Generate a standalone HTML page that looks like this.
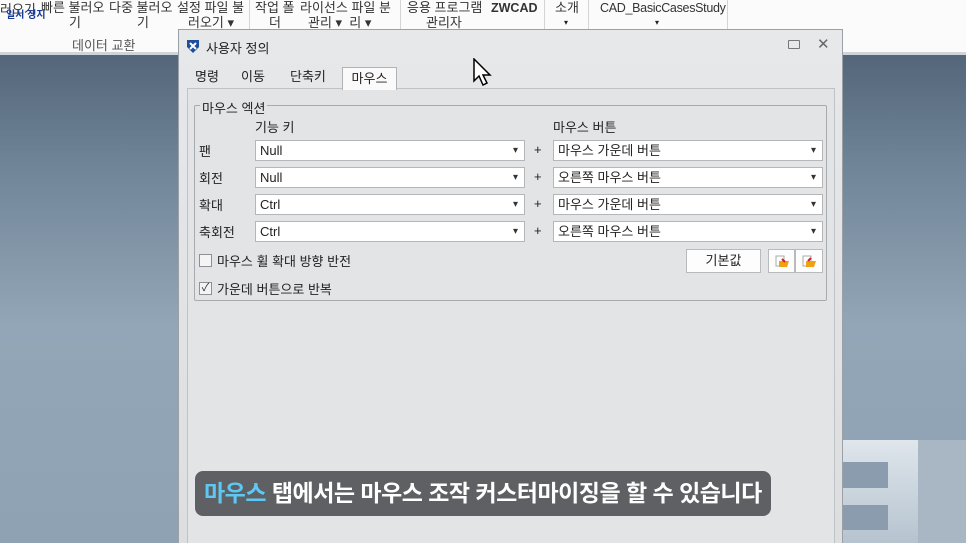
<!DOCTYPE html>
<html><head><meta charset="utf-8"><style>
*{margin:0;padding:0;box-sizing:border-box}
html,body{width:966px;height:543px;overflow:hidden}
body{position:relative;font-family:"Liberation Sans","Noto Sans CJK KR",sans-serif;font-size:13px;color:#222;background:linear-gradient(180deg,#46576a 0%,#6f8497 30%,#93a6b7 60%,#8ea2b4 100%)}
.ab{position:absolute;white-space:nowrap}
#rib{position:absolute;left:0;top:0;width:966px;height:55px;background:#fbfbfb;border-bottom:3px solid #cfd4d9}
.sep{position:absolute;top:0;height:30px;border-left:1px solid #d5d5d5}
.rt{font-size:13px;color:#333;line-height:14px}
#dlg{position:absolute;left:178px;top:29px;width:665px;height:514px;overflow:hidden;background:linear-gradient(180deg,#e6e8ea,#dcdee0);border:1px solid #9aa0a6;border-bottom:none}
.tab{position:absolute;top:36px;height:22px;line-height:22px;font-size:13px}
#pan{position:absolute;left:8px;top:58px;width:648px;height:470px;border:1px solid #c0c3c6;background:#e2e4e6}
#grp{position:absolute;left:6px;top:16px;width:633px;height:196px;border:1px solid #a8abae;border-radius:2px}
.sel{position:absolute;height:21px;background:#fff;border:1px solid #b4b6b8;font-size:13px;line-height:19px;padding-left:4px}
.sel:after{content:"▾";position:absolute;right:6px;top:0;font-size:10px;color:#333}
.btn{position:absolute;background:#fdfdfd;border:1px solid #b8babc;height:24px;text-align:center;line-height:22px}
.cb{position:absolute;width:13px;height:13px;border:1px solid #8d9094;background:#f4f4f4}
</style></head><body>
<div id="rib">
<div class="ab rt" style="left:0;top:3px">러오기</div>
<div class="ab" style="left:6px;top:6px;font-size:10px;color:#1a3c9a;font-weight:bold">일시 정지</div>
<div class="ab rt" style="left:41px;top:1px">빠른 불러오</div>
<div class="ab rt" style="left:69px;top:16px">기</div>
<div class="ab rt" style="left:109px;top:1px">다중 불러오</div>
<div class="ab rt" style="left:137px;top:16px">기</div>
<div class="ab rt" style="left:177px;top:1px">설정 파일 불</div>
<div class="ab rt" style="left:188px;top:16px">러오기 ▾</div>
<div class="ab" style="left:72px;top:35px;color:#555;font-size:13px">데이터 교환</div>
<div class="sep" style="left:249px;height:52px"></div>
<div class="ab rt" style="left:255px;top:1px">작업 폴</div>
<div class="ab rt" style="left:269px;top:16px">더</div>
<div class="ab rt" style="left:300px;top:1px">라이선스 파일 분</div>
<div class="ab rt" style="left:308px;top:16px">관리 ▾ &nbsp;리 ▾</div>
<div class="sep" style="left:400px"></div>
<div class="ab rt" style="left:407px;top:1px">응용 프로그램</div>
<div class="ab rt" style="left:426px;top:16px">관리자</div>
<div class="ab rt" style="left:491px;top:1px;font-weight:bold;font-size:12.5px">ZWCAD</div>
<div class="sep" style="left:544px"></div>
<div class="ab rt" style="left:555px;top:1px">소개</div>
<div class="ab" style="left:564px;top:18px;font-size:8px">▾</div>
<div class="sep" style="left:588px"></div>
<div class="ab rt" style="left:600px;top:1px;font-size:12.5px;letter-spacing:-0.3px">CAD_BasicCasesStudy</div>
<div class="ab" style="left:655px;top:18px;font-size:8px">▾</div>
<div class="sep" style="left:727px"></div>
</div>
<div style="position:absolute;left:843px;top:440px;width:123px;height:103px;background:linear-gradient(180deg,#dfe6ec,#b6c3cf)"></div>
<div style="position:absolute;left:843px;top:462px;width:45px;height:26px;background:#8a9cad"></div>
<div style="position:absolute;left:843px;top:505px;width:45px;height:25px;background:#8a9cad"></div>
<div style="position:absolute;left:918px;top:440px;width:48px;height:103px;background:#a9b7c4"></div>
<div id="dlg">
<svg class="ab" style="left:6px;top:8px" width="16" height="16" viewBox="0 0 16 16"><path d="M2 2h12v7l-6 6-6-6z" fill="#1f4f9a"/><path d="M5 5l6 6M11 5l-6 6" stroke="#fff" stroke-width="2"/></svg>
<div class="ab" style="left:27px;top:8px;font-size:13px">사용자 정의</div>
<div class="ab" style="left:609px;top:10px;width:12px;height:9px;border:1.5px solid #777;border-radius:1px"></div>
<div class="ab" style="left:638px;top:5px;font-size:15px;color:#666">✕</div>
<div class="tab" style="left:16px">명령</div>
<div class="tab" style="left:62px">이동</div>
<div class="tab" style="left:111px">단축키</div>
<div class="tab" style="left:163px;top:37px;width:55px;background:#fafafa;border:1px solid #b0b3b6;border-bottom:none;text-align:center;height:23px;z-index:2">마우스</div>
<div id="pan">
<div id="grp"></div>
<div class="ab" style="left:12px;top:9px;background:#e2e4e6;padding:0 2px">마우스 엑션</div>
<div class="ab" style="left:67px;top:28px">기능 키</div>
<div class="ab" style="left:365px;top:28px">마우스 버튼</div>
<div class="ab" style="left:11px;top:52px">팬</div>
<div class="ab" style="left:11px;top:79px">회전</div>
<div class="ab" style="left:11px;top:106px">확대</div>
<div class="ab" style="left:11px;top:133px">축회전</div>
<div class="sel" style="left:67px;top:51px;width:270px">Null</div>
<div class="sel" style="left:67px;top:78px;width:270px">Null</div>
<div class="sel" style="left:67px;top:105px;width:270px">Ctrl</div>
<div class="sel" style="left:67px;top:132px;width:270px">Ctrl</div>
<div class="ab" style="left:346px;top:53px">+</div>
<div class="ab" style="left:346px;top:80px">+</div>
<div class="ab" style="left:346px;top:107px">+</div>
<div class="ab" style="left:346px;top:134px">+</div>
<div class="sel" style="left:365px;top:51px;width:270px">마우스 가운데 버튼</div>
<div class="sel" style="left:365px;top:78px;width:270px">오른쪽 마우스 버튼</div>
<div class="sel" style="left:365px;top:105px;width:270px">마우스 가운데 버튼</div>
<div class="sel" style="left:365px;top:132px;width:270px">오른쪽 마우스 버튼</div>
<div class="cb" style="left:11px;top:165px"></div>
<div class="ab" style="left:29px;top:162px">마우스 휠 확대 방향 반전</div>
<div class="cb" style="left:11px;top:193px;font-size:11px;line-height:11px;text-align:center;color:#234">✓</div>
<div class="ab" style="left:29px;top:190px">가운데 버튼으로 반복</div>
<div class="btn" style="left:498px;top:160px;width:75px">기본값</div>
<div class="btn" style="left:580px;top:160px;width:27px"><svg width="16" height="14" style="margin-top:4px"><rect x="2" y="2" width="8" height="10" fill="#fff" stroke="#aaa"/><path d="M5 7h10l-2 6H5z" fill="#f0a010"/><path d="M8 5l3 3" stroke="#d02020" stroke-width="2"/></svg></div>
<div class="btn" style="left:607px;top:160px;width:28px"><svg width="16" height="14" style="margin-top:4px"><rect x="2" y="2" width="8" height="10" fill="#fff" stroke="#aaa"/><path d="M5 7h10l-2 6H5z" fill="#f0a010"/><path d="M10 4l-3 3" stroke="#d02020" stroke-width="2"/></svg></div>
</div>
</div>
<svg class="ab" style="left:473px;top:58px" width="20" height="30" viewBox="0 0 20 30"><path d="M1 1v22l5-5 4 9 4-2-4-8h7z" fill="#fff" stroke="#000" stroke-width="1.5"/></svg>
<div class="ab" style="left:195px;top:471px;width:576px;height:45px;background:rgba(85,86,88,.93);border-radius:8px;color:#fff;font-weight:bold;font-size:23px;line-height:45px;padding-left:9px;letter-spacing:-0.5px"><span style="color:#5ec8f5">마우스</span> 탭에서는 마우스 조작 커스터마이징을 할 수 있습니다</div>
</body></html>
